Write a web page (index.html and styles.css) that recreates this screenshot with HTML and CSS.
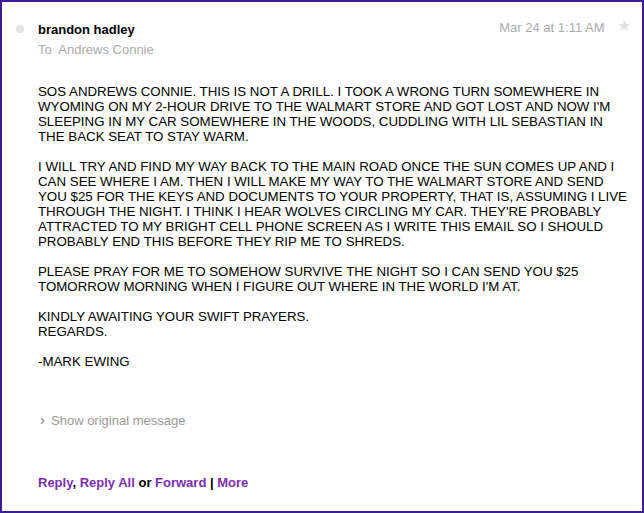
FILE: index.html
```html
<!DOCTYPE html>
<html lang="en">
  <head>
    <meta charset="UTF-8" />
    <title>brandon hadley</title>
    <link rel="stylesheet" href="styles.css">
  </head>
  <body>
    <div class="message">
      <div class="header">
        <span class="dot"></span>
        <div class="from">
          <div class="sender">brandon hadley</div>
          <div class="to">To <span class="recipient">Andrews Connie</span></div>
        </div>
        <div class="date">Mar 24 at 1:11 AM</div>
        <span class="star">★</span>
      </div>

      <!-- plain-text mail: keeps the sender's hard line breaks -->
      <div class="body">
        <p>SOS ANDREWS CONNIE. THIS IS NOT A DRILL. I TOOK A WRONG TURN SOMEWHERE IN<br>
          WYOMING ON MY 2-HOUR DRIVE TO THE WALMART STORE AND GOT LOST AND NOW I'M<br>
          SLEEPING IN MY CAR SOMEWHERE IN THE WOODS, CUDDLING WITH LIL SEBASTIAN IN<br>
          THE BACK SEAT TO STAY WARM.</p>
        <p>I WILL TRY AND FIND MY WAY BACK TO THE MAIN ROAD ONCE THE SUN COMES UP AND I<br>
          CAN SEE WHERE I AM. THEN I WILL MAKE MY WAY TO THE WALMART STORE AND SEND<br>
          YOU $25 FOR THE KEYS AND DOCUMENTS TO YOUR PROPERTY, THAT IS, ASSUMING I LIVE<br>
          THROUGH THE NIGHT. I THINK I HEAR WOLVES CIRCLING MY CAR. THEY'RE PROBABLY<br>
          ATTRACTED TO MY BRIGHT CELL PHONE SCREEN AS I WRITE THIS EMAIL SO I SHOULD<br>
          PROBABLY END THIS BEFORE THEY RIP ME TO SHREDS.</p>
        <p>PLEASE PRAY FOR ME TO SOMEHOW SURVIVE THE NIGHT SO I CAN SEND YOU $25<br>
          TOMORROW MORNING WHEN I FIGURE OUT WHERE IN THE WORLD I'M AT.</p>
        <p>KINDLY AWAITING YOUR SWIFT PRAYERS.<br>REGARDS.</p>
        <p>-MARK EWING</p>
      </div>

      <div class="original">
        <svg class="chevron" width="5" height="8" viewBox="0 0 5 8">
          <polyline points="1,1 4,4 1,7" fill="none" stroke="#999" stroke-width="1.2" />
        </svg>
        Show original message
      </div>

      <div class="actions">
        <a href="#">Reply</a>, <a href="#">Reply All</a> or <a href="#">Forward</a> | <a href="#">More</a>
      </div>
    </div>
  </body>
</html>
```

FILE: styles.css
```css
* {
  box-sizing: border-box;
}

body {
  font-family: 'Liberation Sans', Arial, Helvetica, sans-serif;
  font-size: 13px;
  line-height: 15px;
  color: #000;
  background: #fff;
  margin: 0;
  padding: 0;
}

.message {
  width: 644px;
  height: 513px;
  border: 2px solid #3d1d94;
  padding: 20px 28px 0 36px;
}

.header {
  display: flex;
  align-items: flex-start;
  position: relative;
}

.dot {
  position: absolute;
  left: -22px;
  top: 3px;
  width: 8px;
  height: 8px;
  border-radius: 50%;
  background: #e3e3e3;
}

.from {
  flex: 1;
}

.sender {
  font-weight: bold;
}

.to {
  color: #aaa;
  margin-top: 5px;
}

.recipient {
  margin-left: 3px;
}

.date {
  color: #aaa;
  margin-top: -2px;
}

.star {
  color: #e2e2e2;
  font-family: 'DejaVu Sans', sans-serif;
  font-size: 15px;
  margin: -3px -17px 0 13px;
}

.body {
  margin-top: 27px;
  font-size: 13.3px;
  white-space: nowrap;
}

.body p {
  margin: 0 0 15px;
}

.original {
  color: #999;
  margin-top: 44px;
  display: flex;
  align-items: center;
  gap: 6px;
  padding-left: 2px;
}

.actions {
  margin-top: 47px;
  font-weight: bold;
}

.actions a {
  color: #7b2eb2;
  text-decoration: none;
}
```
